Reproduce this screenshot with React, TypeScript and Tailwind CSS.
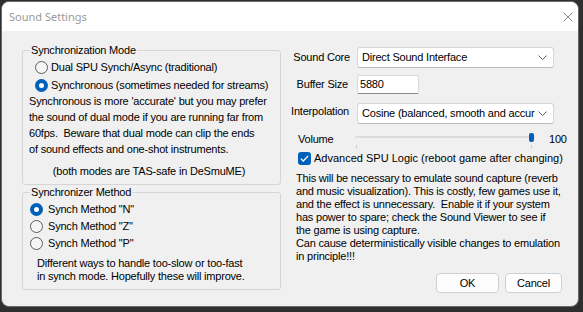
import React from "react";

// Radio button in the Windows 11 style
function Radio({ checked }: { checked?: boolean }) {
  if (checked) {
    return (
      <span className="flex h-[13px] w-[13px] shrink-0 items-center justify-center rounded-full bg-[#005fb8]">
        <span className="h-[5px] w-[5px] rounded-full bg-white" />
      </span>
    );
  }
  return <span className="h-[13px] w-[13px] shrink-0 rounded-full border border-[#5c5c5c] bg-[#f5f5f5]" />;
}

function Chevron() {
  return (
    <svg width="9" height="5" viewBox="0 0 9 5" className="shrink-0">
      <path d="M0.5 0.5 L4.5 4.5 L8.5 0.5" fill="none" stroke="#606060" strokeWidth="1" />
    </svg>
  );
}

function Combo({ value }: { value: string }) {
  return (
    <div className="flex h-[21px] w-[197px] items-center justify-between overflow-hidden rounded-[3px] border border-[#d6d6d6] border-b-[#bdbdbd] bg-white pl-[4px] pr-[6px]">
      <span className="whitespace-nowrap">{value}</span>
      <Chevron />
    </div>
  );
}

const syncText = [
  "Synchronous is more 'accurate' but you may prefer",
  "the sound of dual mode if you are running far from",
  "60fps.  Beware that dual mode can clip the ends",
  "of sound effects and one-shot instruments.",
];

const spuText = [
  "This will be necessary to emulate sound capture (reverb",
  "and music visualization). This is costly, few games use it,",
  "and the effect is unnecessary.  Enable it if your system",
  "has power to spare; check the Sound Viewer to see if",
  "the game is using capture.",
  "Can cause deterministically visible changes to emulation",
  "in principle!!!",
];

export default function App() {
  return (
    <div className="h-[312px] w-[583px] overflow-hidden bg-[#2f2f2f] pl-px pt-px">
      <div className="flex h-[306px] w-[578px] flex-col overflow-hidden rounded-[8px] border border-[#6a6a6a] bg-[#f0f0f0] font-['Liberation_Sans',Arial,sans-serif] text-[11px] leading-[13px] tracking-[-0.2px] text-black">
        {/* title bar */}
        <div className="flex h-[29px] shrink-0 items-center justify-between bg-white pl-[7px] pr-[5px]">
          <span className="font-['Noto_Sans',sans-serif] text-[11px] tracking-normal text-[#9a9a9a]">Sound Settings</span>
          <svg width="10" height="10" viewBox="0 0 10 10">
            <path d="M0.5 0.5 L9.5 9.5 M9.5 0.5 L0.5 9.5" stroke="#8a8a8a" strokeWidth="1" />
          </svg>
        </div>

        <div className="flex flex-1">
          {/* left column */}
          <div className="flex w-[279px] shrink-0 flex-col pl-[20px]">
            <fieldset className="mt-[13px] w-[259px] rounded-[3px] border border-[#d5d5d5] pb-[6px]">
              <legend className="ml-[7px] px-[1px]">Synchronization Mode</legend>
              <div className="flex flex-col pt-[1px]">
                <div className="flex h-[18px] items-center gap-[3px] pl-[12px]">
                  <Radio />
                  <span>Dual SPU Synch/Async (traditional)</span>
                </div>
                <div className="flex h-[18px] items-center gap-[3px] pl-[12px]">
                  <Radio checked />
                  <span>Synchronous (sometimes needed for streams)</span>
                </div>
                <div className="-mt-[1px] pl-[6px] leading-[16px]">
                  {syncText.map((t) => (
                    <div key={t} className="whitespace-pre">{t}</div>
                  ))}
                </div>
                <div className="mt-[8px] pr-[5px] text-center">(both modes are TAS-safe in DeSmuME)</div>
              </div>
            </fieldset>

            <fieldset className="mt-[1px] w-[259px] rounded-[3px] border border-[#d5d5d5] pb-[6px]">
              <legend className="ml-[7px] px-[1px]">Synchronizer Method</legend>
              <div className="flex flex-col pt-[2px]">
                {["N", "Z", "P"].map((m, i) => (
                  <div key={m} className="flex h-[17px] items-center gap-[5px] pl-[7px]">
                    <Radio checked={i === 0} />
                    <span>Synch Method "{m}"</span>
                  </div>
                ))}
                <div className="mt-[5px] pl-[14px]">
                  <div>Different ways to handle too-slow or too-fast</div>
                  <div>in synch mode. Hopefully these will improve.</div>
                </div>
              </div>
            </fieldset>
          </div>

          {/* right column */}
          <div className="flex flex-1 flex-col pl-[8px]">
            <div className="mt-[16px] flex items-center">
              <span className="w-[62px] pr-[1px] text-right">Sound Core</span>
              <span className="ml-[6px]">
                <Combo value="Direct Sound Interface" />
              </span>
            </div>

            <div className="mt-[7px] flex items-center">
              <span className="w-[62px] pr-[3px] text-right">Buffer Size</span>
              <div className="ml-[6px] flex h-[19px] w-[62px] items-start rounded-[2px] border border-[#dadada] border-b-[#8a8a8a] bg-white pl-[2px] pt-[2px]">
                5880
              </div>
            </div>

            <div className="mt-[9px] flex items-center">
              <span className="-mt-[4px] w-[62px] pr-[2px] text-right">Interpolation</span>
              <span className="ml-[6px]">
                <Combo value="Cosine (balanced, smooth and accur" />
              </span>
            </div>

            <div className="mt-[7px] flex h-[16px] items-center">
              <span className="ml-[9px] w-[55px]">Volume</span>
              <div className="relative h-[16px] w-[182px]">
                <div className="absolute left-[2px] right-0 top-[5px] h-[2px] rounded-full bg-[#dcdcdc]" />
                <div className="absolute right-[1px] top-[2px] h-[9px] w-[5px] rounded-[2px] bg-[#005fb8]" />
                <div className="absolute left-[3px] top-[14px] h-[3px] w-px bg-[#c8c8c8]" />
                <div className="absolute right-[3px] top-[14px] h-[3px] w-px bg-[#c8c8c8]" />
              </div>
              <span className="ml-[14px]">100</span>
            </div>

            <div className="mt-[5px] flex h-[13px] items-center gap-[3px] pl-[9px]">
              <span className="flex h-[13px] w-[13px] shrink-0 items-center justify-center rounded-[3px] bg-[#005fb8]">
                <svg width="9" height="7" viewBox="0 0 9 7">
                  <path d="M0.8 3.6 L3.3 6 L8.2 0.9" fill="none" stroke="white" strokeWidth="1.3" />
                </svg>
              </span>
              <span className="whitespace-nowrap tracking-[0px]">Advanced SPU Logic (reboot game after changing)</span>
            </div>

            <div className="mt-[7px] pl-[7px]">
              {spuText.map((t) => (
                <div key={t} className="whitespace-pre">{t}</div>
              ))}
            </div>

            <div className="mt-[10px] flex justify-end gap-[6px] pr-[16px]">
              <button className="flex h-[20px] w-[63px] items-center justify-center rounded-[4px] border border-[#d0d0d0] bg-[#fdfdfd]">
                OK
              </button>
              <button className="flex h-[20px] w-[57px] items-center justify-center rounded-[4px] border border-[#d0d0d0] bg-[#fdfdfd]">
                Cancel
              </button>
            </div>
          </div>
        </div>
      </div>
    </div>
  );
}
